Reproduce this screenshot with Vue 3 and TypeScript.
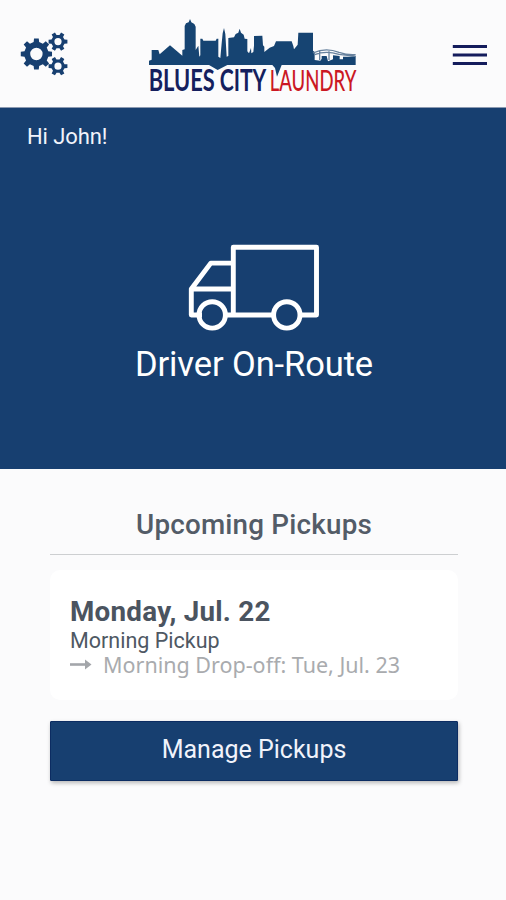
<script setup lang="ts">
interface Pickup {
  day: string
  slot: string
  dropOff: string
}

const userName = 'John'
const pickup: Pickup = {
  day: 'Monday, Jul. 22',
  slot: 'Morning Pickup',
  dropOff: 'Morning Drop-off: Tue, Jul. 23',
}

// Outline of a gear with trapezoid teeth and a round hole
function gear(cx: number, cy: number, outer: number, root: number, hole: number, teeth: number): string {
  const step = (Math.PI * 2) / teeth
  const pts: string[] = []
  const at = (r: number, a: number) => `${(cx + r * Math.cos(a)).toFixed(2)} ${(cy + r * Math.sin(a)).toFixed(2)}`
  for (let i = 0; i < teeth; i++) {
    const a = i * step
    pts.push(at(root, a - step * 0.29), at(outer, a - step * 0.19), at(outer, a + step * 0.19), at(root, a + step * 0.29))
  }
  return `M${pts.join('L')}Z M${cx - hole} ${cy}a${hole} ${hole} 0 1 0 ${hole * 2} 0a${hole} ${hole} 0 1 0 ${-hole * 2} 0Z`
}

const gears = [
  gear(16.4, 22, 15.8, 12.2, 6.2, 8),
  gear(38, 9.6, 9.6, 6.8, 3.6, 6),
  gear(38, 34.2, 9.6, 6.8, 3.6, 6),
].join(' ')
</script>

<template>
  <div class="screen">
    <header class="topbar">
      <button class="icon-button" aria-label="Settings">
        <svg width="48" height="44" viewBox="0 0 48 44"><path :d="gears" fill="#173f70" fill-rule="evenodd" /></svg>
      </button>
      <svg class="logo" width="214" height="78" viewBox="24 24 642 234" role="img">
        <path
          fill="#164472"
          d="M30 165V152L38 149V120H58L62 133L93 106L130 137V120L137 118V48L141 40L149 37L153 27L157 37L166 42L170 50V120L178 107L181 140L184 136V86H190L193 92H230L233 86H238V140L244 144L248 100L251 70L255 54L259 72L263 140L268 138V84L285 82L290 72L298 68L302 56L306 68L314 74L317 86L325 87V124L330 130L336 114L337 130L343 126L345 107V78L370 77L372 106L376 110V126L392 113L405 108L411 94H458L463 108L465 118L476 104L478 68H522V122L527 126V150L544 152L548 146V138H563L567 154L582 148V136L602 138V148H612V140H630L650 138V165H428L414 200L408 174L400 165H265L236 180L210 165Z"
        />
        <path d="M522 129Q560 111 600 127Q625 136 650 134M527 134Q560 121 600 133L650 139M542 121V150M570 124V150" fill="none" stroke="#68829e" stroke-width="4" />
        <g class="logo-text" stroke-linejoin="round">
          <text x="29" y="242" textLength="198" lengthAdjust="spacingAndGlyphs">BLUES</text>
          <text x="242" y="242" textLength="140" lengthAdjust="spacingAndGlyphs">CITY</text>
          <text class="red" x="392" y="242" textLength="260" lengthAdjust="spacingAndGlyphs">LAUNDRY</text>
        </g>
      </svg>
      <button class="icon-button" aria-label="Menu">
        <svg width="36" height="22" viewBox="0 0 36 22"><path d="M.8 2.5H35M.8 11H35M.8 19.5H35" stroke="#141c5c" stroke-width="3.2" /></svg>
      </button>
    </header>

    <section class="hero">
      <p class="greeting"><span>Hi {{ userName }}!</span></p>
      <svg class="truck" width="134" height="90" viewBox="0 0 134 90" fill="none" stroke="#fff" stroke-width="4.9" stroke-linejoin="round">
        <path d="M15 74H4.3V48L23.8 22.1H46.3M46.3 74V6.3H129.5V74H114M86 74H40M4.3 48H46.3" />
        <circle cx="25.2" cy="73.9" r="13.2" />
        <circle cx="99.8" cy="73.9" r="13.2" />
      </svg>
      <h1 class="status">Driver On-Route</h1>
    </section>

    <main class="content">
      <h2 class="heading">Upcoming Pickups</h2>
      <article class="card">
        <h3 class="day">{{ pickup.day }}</h3>
        <p class="slot">{{ pickup.slot }}</p>
        <p class="drop">
          <svg width="22" height="12" viewBox="0 0 22 12"><path d="M0 5.5H17" stroke="#a3a6aa" stroke-width="2.6" /><path d="M15 .5L21.5 5.5L15 10.5Z" fill="#a3a6aa" /></svg>
          <span>{{ pickup.dropOff }}</span>
        </p>
      </article>
      <button class="manage">Manage Pickups</button>
    </main>
  </div>
</template>

<style>
body {
  margin: 0;
  background: #fbfbfc;
}
</style>

<style scoped>
.screen {
  box-sizing: border-box;
  height: 900px;
  background: #fbfbfc;
  font-family: Roboto, "Liberation Sans", sans-serif;
}
.topbar {
  box-sizing: border-box;
  height: 108px;
  padding: 0 18px 0 20px;
  display: flex;
  align-items: center;
  justify-content: space-between;
  border-bottom: 1px solid #8c9ab1;
}
.icon-button {
  display: flex;
  padding: 0;
  border: 0;
  background: none;
}
.icon-button:last-child {
  margin-top: 2px;
}
.logo {
  display: block;
  overflow: visible;
  margin-top: 7px;
  margin-left: -12px;
}
.logo-text {
  font-family: Lato, sans-serif;
  font-size: 89px;
  font-weight: 700;
}
.logo-text text {
  fill: #151f5e;
  stroke: #fbfbfc;
  stroke-width: 7px;
  paint-order: stroke;
}
.logo-text .red {
  fill: #cb1823;
  font-weight: 500;
}
.hero {
  box-sizing: border-box;
  height: 361px;
  padding-top: 14px;
  display: flex;
  flex-direction: column;
  align-items: center;
  background: #173f70;
  color: #fff;
}
.greeting {
  align-self: flex-start;
  margin: 0 0 0 27px;
  font-size: 22px;
  line-height: 30px;
  letter-spacing: -0.1px;
  color: #f1f3fb;
}
.truck {
  margin-top: 89px;
  margin-left: 1px;
}
.status {
  margin: 13px 0 0 2px;
  font-size: 34.5px;
  font-weight: 400;
  line-height: 40px;
  letter-spacing: -0.1px;
  white-space: nowrap;
}
.content {
  padding: 36px 48px 0 50px;
}
.heading {
  margin: 0;
  height: 49px;
  border-bottom: 1px solid #cdcfd1;
  font-size: 27.8px;
  font-weight: 500;
  line-height: 40px;
  letter-spacing: 0.2px;
  text-align: center;
  color: #535c67;
}
.card {
  box-sizing: border-box;
  height: 130px;
  margin-top: 15px;
  padding: 26px 20px 0;
  border-radius: 10px;
  background: #fff;
}
.day {
  margin: 0;
  font-size: 27.8px;
  font-weight: 700;
  line-height: 32px;
  letter-spacing: 0.25px;
  color: #4b5460;
}
.slot {
  margin: 0;
  font-size: 21.5px;
  line-height: 25px;
  color: #4e5863;
}
.drop {
  display: flex;
  align-items: center;
  gap: 11px;
  margin: -1px 0 0;
  font-family: "Noto Sans", sans-serif;
  font-size: 21.5px;
  font-weight: 400;
  line-height: 26px;
  white-space: nowrap;
  color: #a9abae;
}
.manage {
  display: block;
  width: 100%;
  height: 60px;
  margin-top: 21px;
  padding: 0 0 4px;
  border: 1px solid #0c2c62;
  border-radius: 1px;
  background: #173f70;
  box-shadow: 1px 2px 4px rgba(0, 0, 0, 0.28);
  color: #f1f3fb;
  font-family: inherit;
  font-size: 25px;
}
</style>
